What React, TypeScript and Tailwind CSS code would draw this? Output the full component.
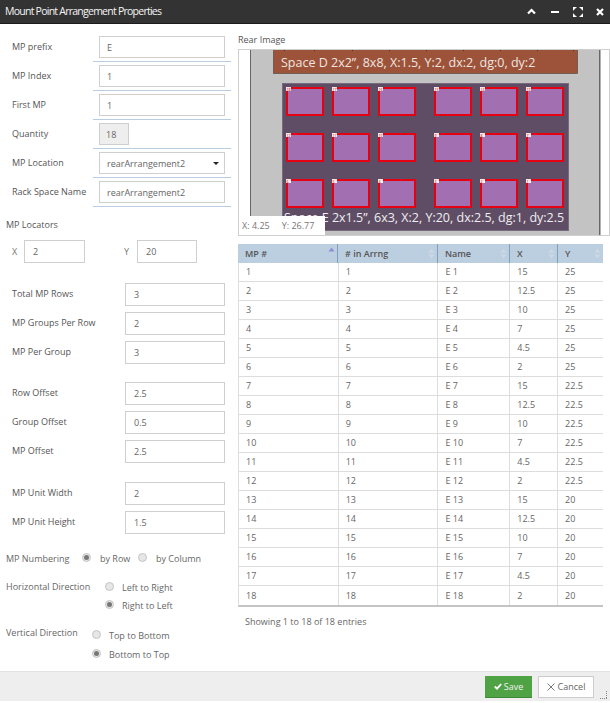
import React from "react";

function Field({ label, value, small, select }: { label: string; value: string; small?: boolean; select?: boolean }) {
  return (
    <div className="flex h-[26px] mb-[3px]">
      <div className="w-[93px] pl-[12px] h-[22px] flex items-center pb-[1px] whitespace-nowrap text-[#555]">{label}</div>
      <div className="w-[138px] pl-[6px] border-b border-[#b9cde0]">
        <div className={`h-[22px] border border-[#cfcfcf] flex items-center justify-between ${small ? "w-[30px] bg-[#eeeeee] pl-[6px]" : "w-[126px] pl-[7px] pr-[5px]"}`}>
          <span className="text-[#666]">{value}</span>
          {select && <span className="w-0 h-0 border-x-[3px] border-x-transparent border-t-[3px] border-t-[#222]" />}
        </div>
      </div>
    </div>
  );
}

function NumRow({ label, value }: { label: string; value: string }) {
  return (
    <div className="flex items-center h-[23px] justify-between">
      <span className="text-[#555] whitespace-nowrap pb-[2px]">{label}</span>
      <div className="w-[100px] h-[23px] border border-[#cfcfcf] flex items-center pl-[8px] text-[#666]">{value}</div>
    </div>
  );
}

function Radio({ on }: { on?: boolean }) {
  return (
    <span className="w-[9px] h-[9px] rounded-full border border-[#c4c4c4] bg-[#e6e6e6] flex items-center justify-center shrink-0">
      {on && <span className="w-[5px] h-[5px] rounded-full bg-[#777]" />}
    </span>
  );
}

const rows = [
  ["1", "1", "E 1", "15", "25"],
  ["2", "2", "E 2", "12.5", "25"],
  ["3", "3", "E 3", "10", "25"],
  ["4", "4", "E 4", "7", "25"],
  ["5", "5", "E 5", "4.5", "25"],
  ["6", "6", "E 6", "2", "25"],
  ["7", "7", "E 7", "15", "22.5"],
  ["8", "8", "E 8", "12.5", "22.5"],
  ["9", "9", "E 9", "10", "22.5"],
  ["10", "10", "E 10", "7", "22.5"],
  ["11", "11", "E 11", "4.5", "22.5"],
  ["12", "12", "E 12", "2", "22.5"],
  ["13", "13", "E 13", "15", "20"],
  ["14", "14", "E 14", "12.5", "20"],
  ["15", "15", "E 15", "10", "20"],
  ["16", "16", "E 16", "7", "20"],
  ["17", "17", "E 17", "4.5", "20"],
  ["18", "18", "E 18", "2", "20"],
];

const cols = ["w-[100px]", "w-[100px]", "w-[72px]", "w-[48px]", "w-[45px]"];
const heads = ["MP #", "# in Arrng", "Name", "X", "Y"];

function Rear() {
  const xs = [287, 333, 379, 435, 481, 527];
  const ys = [88, 134, 180];
  const names = [
    ["18", "17", "16", "15", "14", "13"],
    ["12", "11", "10", "9", "8", "7"],
    ["6", "5", "4", "3", "2", "1"],
  ];
  const ticks = [284, 314, 352, 389, 426, 463, 500, 537, 573];
  return (
    <svg width="370" height="185" viewBox="239 50 370 185" className="block" style={{ fontFamily: "'Open Sans', sans-serif" }}>
      <rect x="239" y="50" width="370" height="185" fill="#fff" />
      <rect x="250" y="50" width="350" height="185" fill="#c3c3c3" />
      <rect x="250" y="50" width="1" height="185" fill="#666" />
      <rect x="599" y="50" width="1.5" height="185" fill="#666" />
      <rect x="273.500" y="49" width="304" height="24.500" fill="#9c533a" stroke="#5b4a44" strokeWidth="0.700" />
      {ticks.map((t) => (
        <rect key={t} x={t} y="50" width="1" height="1" fill="#333" />
      ))}
      <text x="281" y="66.500" fontSize="12.500" fill="#f0e6e0">Space D 2x2”, 8x8, X:1.5, Y:2, dx:2, dg:0, dy:2</text>
      <rect x="282.500" y="83.500" width="286" height="147" fill="#5f4d66" stroke="#776a7c" strokeWidth="1" />
      {ys.map((y, r) =>
        xs.map((x, c) => (
          <g key={`${r}-${c}`}>
            <rect x={x} y={y} width="36" height="27" fill="#a26fb0" stroke="#e50012" strokeWidth="2" />
            <rect x={x - 1} y={y - 1} width="5" height="4" fill="#fff" opacity="0.9" />
            <text x={x - 0.5} y={y + 2.5} fontSize="3.500" fill="#c00">{names[r][c]}</text>
          </g>
        ))
      )}
      <text x="284" y="221.500" fontSize="12.500" fill="#eee">Space E 2x1.5”, 6x3, X:2, Y:20, dx:2.5, dg:1, dy:2.5</text>
    </svg>
  );
}

export default function App() {
  return (
    <div className="w-[610px] h-[703px] bg-white flex flex-col overflow-hidden text-[9px] leading-none font-['Open_Sans',sans-serif] relative">
      <div className="h-[24px] bg-[#333333] border-b border-[#1c1c1c] flex items-center justify-between pl-[5px] shrink-0">
        <span className="text-[#f4f4f4] text-[10.5px] font-normal tracking-[-0.75px]">Mount Point Arrangement Properties</span>
        <div className="flex items-center">
          <span className="w-[23px] flex justify-center">
            <svg width="9" height="7" viewBox="0 0 9 7"><path d="M1 5.500l3.500-3.500 3.500 3.500" fill="none" stroke="#fff" strokeWidth="2.200" /></svg>
          </span>
          <span className="w-[23px] flex justify-center">
            <svg width="8" height="8" viewBox="0 0 8 8"><rect y="3" width="8" height="2" fill="#fff" /></svg>
          </span>
          <span className="w-[23px] flex justify-center">
            <svg width="10" height="10" viewBox="0 0 10 10"><path d="M0 0h3.500L0 3.500zM10 0v3.500L6.500 0zM0 10v-3.500L3.500 10zM10 10H6.500L10 6.500z" fill="#fff" stroke="#fff" strokeWidth="0.600" /></svg>
          </span>
          <span className="w-[21px] flex justify-center">
            <svg width="8" height="8" viewBox="0 0 8 8"><path d="M1 1l6 6M7 1l-6 6" stroke="#fff" strokeWidth="2.200" /></svg>
          </span>
        </div>
      </div>

      <div className="flex-1 flex min-h-0">
        <div className="w-[238px] shrink-0 pt-[12px]">
          <Field label="MP prefix" value="E" />
          <Field label="MP Index" value="1" />
          <Field label="First MP" value="1" />
          <Field label="Quantity" value="18" small />
          <Field label="MP Location" value="rearArrangement2" select />
          <Field label="Rack Space Name" value="rearArrangement2" />

          <div className="pl-[6px] mt-[13px] text-[#555]">MP Locators</div>
          <div className="flex items-center mt-[11px] pl-[12px] text-[#777]">
            <span className="w-[12px]">X</span>
            <div className="w-[61px] h-[23px] border border-[#cfcfcf] flex items-center pl-[8px] text-[#666]">2</div>
            <span className="ml-[39px] w-[13px]">Y</span>
            <div className="w-[60px] h-[23px] border border-[#cfcfcf] flex items-center pl-[8px] text-[#666]">20</div>
          </div>

          <div className="pl-[12px] pr-[13px] mt-[20px] flex flex-col gap-[6px]">
            <NumRow label="Total MP Rows" value="3" />
            <NumRow label="MP Groups Per Row" value="2" />
            <NumRow label="MP Per Group" value="3" />
          </div>
          <div className="pl-[12px] pr-[13px] mt-[18px] flex flex-col gap-[6px]">
            <NumRow label="Row Offset" value="2.5" />
            <NumRow label="Group Offset" value="0.5" />
            <NumRow label="MP Offset" value="2.5" />
          </div>
          <div className="pl-[12px] pr-[13px] mt-[19px] flex flex-col gap-[6px]">
            <NumRow label="MP Unit Width" value="2" />
            <NumRow label="MP Unit Height" value="1.5" />
          </div>

          <div className="flex items-center pl-[6px] mt-[16px] text-[#666] h-[14px]">
            <span className="w-[76px] whitespace-nowrap pt-[2px]">MP Numbering</span>
            <Radio on />
            <span className="ml-[9px] w-[38px] pt-[2px]">by Row</span>
            <Radio />
            <span className="ml-[9px] pt-[2px]">by Column</span>
          </div>
          <div className="flex pl-[6px] mt-[17px] text-[#666]">
            <span className="w-[99px] whitespace-nowrap pt-[1px]">Horizontal Direction</span>
            <div className="flex flex-col gap-[7px]">
              <div className="flex items-center gap-[8px]"><Radio /><span className="pt-[2px]">Left to Right</span></div>
              <div className="flex items-center gap-[8px]"><Radio on /><span className="pt-[2px]">Right to Left</span></div>
            </div>
          </div>
          <div className="flex pl-[6px] mt-[19px] text-[#666]">
            <span className="w-[86px] whitespace-nowrap -mt-[1px]">Vertical Direction</span>
            <div className="flex flex-col gap-[8px]">
              <div className="flex items-center gap-[8px]"><Radio /><span className="pt-[2px]">Top to Bottom</span></div>
              <div className="flex items-center gap-[8px]"><Radio on /><span className="pt-[2px]">Bottom to Top</span></div>
            </div>
          </div>
        </div>

        <div className="flex-1 min-w-0 pt-[11px]">
          <div className="text-[#555] h-[14px]">Rear Image</div>
          <div className="relative border border-[#cfcfcf] h-[187px]">
            <Rear />
            <div className="absolute left-0 bottom-0 w-[86px] h-[19px] bg-white flex items-center pl-[3px] gap-[12px] text-[#777]">
              <span>X: 4.25</span>
              <span>Y: 26.77</span>
            </div>
          </div>

          <div className="mt-[8px] w-[365px]">
            <div className="flex bg-[#bccfe0] h-[19px] items-center font-semibold text-[#555]">
              {heads.map((h, i) => (
                <div key={h} className={`${cols[i]} h-full flex items-center justify-between pl-[7px] pr-[2px] ${i < 4 ? "border-r border-[#7f9fbf]" : ""}`}>
                  <span>{h}</span>
                  <svg width="7" height="11" viewBox="0 0 7 11" className={i === 0 ? "-mt-[3px]" : ""}>
                    <path d="M3.500 0.500L6.500 4.500H0.500z" fill={i === 0 ? "#8d8ed6" : "#ced8e3"} />
                    {i > 0 && <path d="M3.500 10.500L6.500 6.500H0.500z" fill="#ced8e3" />}
                  </svg>
                </div>
              ))}
            </div>
            <div className="border-b-2 border-[#c4c4c4] border-l border-l-[#dddddd]">
              {rows.map((r) => (
                <div key={r[0]} className="flex h-[19px] items-center border-b border-[#dddddd] last:border-b-0 text-[#666]">
                  {r.map((c, i) => (
                    <div key={i} className={`${cols[i]} h-full flex items-center pl-[7px] pb-[1px] ${i < 4 ? "border-r border-[#dddddd]" : ""}`}>{c}</div>
                  ))}
                </div>
              ))}
            </div>
            <div className="mt-[10px] pl-[7px] text-[#666]">Showing 1 to 18 of 18 entries</div>
          </div>
        </div>
      </div>

      <div className="h-[30px] bg-[#eeeeee] border-t border-[#e2e2e2] flex items-center justify-end gap-[6px] pr-[16px] shrink-0 mb-[2px]">
        <button className="w-[47px] h-[22px] bg-[#4fa345] border-b border-[#3f8a37] text-[#f2f2f2] flex items-center justify-center gap-[2px]">
          <svg width="8" height="7" viewBox="0 0 8 7"><path d="M0.800 3.500L3 5.700 7.200 1" fill="none" stroke="#fff" strokeWidth="1.800" /></svg>
          Save
        </button>
        <button className="w-[56px] h-[22px] bg-white border border-[#cccccc] text-[#666] flex items-center justify-center gap-[3px]">
          <svg width="8" height="8" viewBox="0 0 8 8"><path d="M0.500 0.500l7 7M7.500 0.500l-7 7" stroke="#555" strokeWidth="0.800" /></svg>
          Cancel
        </button>
      </div>
      <svg width="8" height="9" viewBox="0 0 8 9" className="absolute right-[2px] bottom-[3px]">
        <path d="M6.500 0v8M0 7.500h8" stroke="#888" strokeWidth="1" strokeDasharray="1 1" fill="none" />
      </svg>
    </div>
  );
}
